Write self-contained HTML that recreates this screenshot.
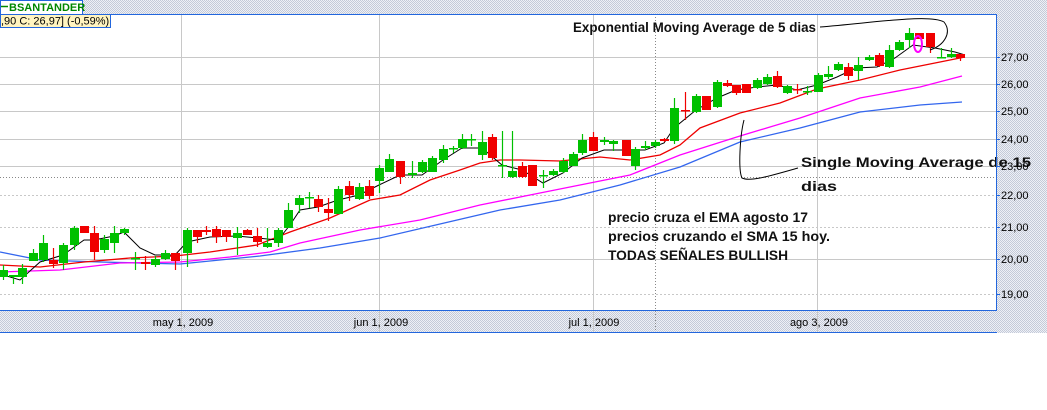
<!DOCTYPE html>
<html><head><meta charset="utf-8"><style>
html,body{margin:0;padding:0;background:#fff;width:1047px;height:410px;overflow:hidden;font-family:"Liberation Sans",sans-serif}
</style></head><body>
<svg width="1047" height="410" viewBox="0 0 1047 410" xmlns="http://www.w3.org/2000/svg" font-family="Liberation Sans, sans-serif">
<defs>
<pattern id="h" width="2" height="2" patternUnits="userSpaceOnUse"><rect width="2" height="2" fill="#eef0f6"/><rect width="1" height="1" fill="#c4cad8"/><rect x="1" y="1" width="1" height="1" fill="#c4cad8"/></pattern>
</defs>
<rect x="0" y="0" width="1047" height="333" fill="url(#h)"/>
<rect x="0" y="14" width="996" height="296" fill="#fff"/>
<rect x="0" y="333" width="1047" height="77" fill="#fff"/>
<g stroke="#c8c8c8" stroke-width="1">
<line x1="0" y1="57.5" x2="996" y2="57.5"/><line x1="0" y1="84.5" x2="996" y2="84.5"/>
<line x1="0" y1="111.5" x2="996" y2="111.5"/><line x1="0" y1="139.5" x2="996" y2="139.5"/>
<line x1="0" y1="166.5" x2="996" y2="166.5"/><line x1="0" y1="259.5" x2="996" y2="259.5"/>
<line x1="181.5" y1="14" x2="181.5" y2="333"/><line x1="379.5" y1="14" x2="379.5" y2="333"/>
<line x1="593.5" y1="14" x2="593.5" y2="333"/><line x1="817.5" y1="14" x2="817.5" y2="333"/>
</g>
<g stroke="#c8c8c8" stroke-dasharray="2,2">
<line x1="0" y1="195.5" x2="996" y2="195.5"/><line x1="0" y1="227.5" x2="996" y2="227.5"/><line x1="0" y1="294.5" x2="996" y2="294.5"/>
</g>
<g stroke="#888" stroke-dasharray="1,2">
<line x1="0" y1="177.5" x2="996" y2="177.5"/><line x1="655.5" y1="14" x2="655.5" y2="333"/>
</g>
<g fill="none" stroke-width="1.3">
<polyline stroke="#3366ee" points="0,252 40,260 100,262 180,264 260,256 320,248 380,238 440,224 500,210 560,200 620,185 680,167 740,142 800,128 860,112 920,105 962,102"/>
<polyline stroke="#ff00ff" points="0,272 60,270 120,263 180,262 230,257 270,252 300,243 360,230 420,220 480,205 530,195 580,185 630,175 680,155 740,136 800,118 860,98 920,87 962,76"/>
<polyline stroke="#ee0000" points="0,265 40,267 84,262 130,258 175,256 210,252 257,245 290,232 330,218 370,200 400,195 430,180 460,170 480,163 500,160 520,160 560,161 600,157 630,160 660,155 680,145 700,128 740,113 780,103 817,89 860,80 900,70 930,64 965,57"/>
<polyline stroke="#000" stroke-width="1" points="0,274 20,280 40,262 63,255 84,240 94,240 114,236 124,232 140,248 155,255 175,255 187,242 210,237 237,236 257,238 278,240 290,225 300,210 318,207 338,200 359,195 379,185 400,175 422,175 443,160 462,148 482,148 502,165 522,170 543,183 563,173 582,158 604,150 626,150 645,150 664,143 674,128 696,110 717,98 736,90 757,87 777,85 797,90 817,85 837,77 856,68 877,67 895,58 913,45 935,48 955,52 965,55"/>
</g>
<g id="c"></g>
<g fill="none" stroke="#000" stroke-width="1">
<path d="M820,27 C880,22 930,14 944,22 C952,32 945,45 930,50"/>
<path d="M798,168 C770,176 750,182 742,178 C738,170 740,135 744,120"/>
</g>
<ellipse cx="918" cy="44" rx="4" ry="8" fill="none" stroke="#ff00ff" stroke-width="2"/>
<g font-weight="bold" font-size="14" fill="#111">
<text x="573" y="32" textLength="243" lengthAdjust="spacingAndGlyphs">Exponential Moving Average de 5 dias</text>
<text x="801" y="167" textLength="230" lengthAdjust="spacingAndGlyphs">Single Moving Average de 15</text>
<text x="801" y="191" textLength="36" lengthAdjust="spacingAndGlyphs">dias</text>
<text x="608" y="222" textLength="200" lengthAdjust="spacingAndGlyphs">precio cruza el EMA agosto 17</text>
<text x="608" y="241" textLength="222" lengthAdjust="spacingAndGlyphs">precios cruzando el SMA 15 hoy.</text>
<text x="608" y="260" textLength="180" lengthAdjust="spacingAndGlyphs">TODAS SEÑALES BULLISH</text>
</g>
<g stroke="#2266dd" stroke-width="1" fill="none">
<line x1="0" y1="14.5" x2="997" y2="14.5"/><line x1="996.5" y1="14" x2="996.5" y2="311"/>
<line x1="0" y1="310.5" x2="997" y2="310.5"/><line x1="0" y1="332.5" x2="997" y2="332.5"/>
</g>
<g stroke="#2266dd">
<line x1="996" y1="57.5" x2="1000" y2="57.5"/><line x1="996" y1="84.5" x2="1000" y2="84.5"/><line x1="996" y1="111.5" x2="1000" y2="111.5"/><line x1="996" y1="139.5" x2="1000" y2="139.5"/><line x1="996" y1="166.5" x2="1000" y2="166.5"/><line x1="996" y1="195.5" x2="1000" y2="195.5"/><line x1="996" y1="227.5" x2="1000" y2="227.5"/><line x1="996" y1="259.5" x2="1000" y2="259.5"/><line x1="996" y1="294.5" x2="1000" y2="294.5"/>
</g>
<g font-size="11" fill="#000">
<text x="1001" y="61">27,00</text><text x="1001" y="88">26,00</text><text x="1001" y="115">25,00</text><text x="1001" y="143">24,00</text><text x="1001" y="170">23,00</text><text x="1001" y="199">22,00</text><text x="1001" y="231">21,00</text><text x="1001" y="263">20,00</text><text x="1001" y="298">19,00</text>
<g text-anchor="middle"><text x="183" y="326">may 1, 2009</text><text x="381" y="326">jun 1, 2009</text><text x="594" y="326">jul 1, 2009</text><text x="819" y="326">ago 3, 2009</text></g>
</g>
<rect x="0.5" y="0.5" width="82" height="14" fill="#fff" stroke="#2266dd"/>
<line x1="1" y1="6.5" x2="8" y2="6.5" stroke="#008800" stroke-width="1.5"/>
<text x="9" y="11" font-size="11" font-weight="bold" fill="#008800">BSANTANDER</text>
<rect x="0.5" y="14.5" width="110" height="13" fill="#fff4c0" stroke="#2266dd"/>
<text x="1" y="24.5" font-size="11" fill="#000">,90  C: 26,97] (-0,59%)</text>
</svg>
<script>
var d=[[3,'g',270,277,265,280],[13,'g',275,277,275,284],[22,'g',268,277,264,284],[33,'g',253,261,249,261],[43,'g',243,260,235,262],[53,'r',260,264,248,268],[63,'g',245,263,243,270],[74,'g',228,245,226,250],[84,'r',226,233,226,233],[94,'r',233,252,226,260],[104,'g',239,250,235,253],[114,'g',233,243,226,253],[124,'g',229,233,228,235],[135,'g',258,259,252,270],[145,'r',262,264,256,270],[155,'g',259,265,256,267],[165,'g',253,259,250,260],[175,'r',253,261,253,270],[187,'g',230,253,228,267],[197,'r',230,237,230,243],[206,'r',230,232,226,235],[216,'r',229,237,226,243],[226,'r',230,237,230,242],[237,'g',233,238,227,255],[247,'r',230,235,229,235],[257,'r',236,242,228,247],[267,'g',243,247,228,248],[278,'g',230,243,228,247],[288,'g',210,228,203,228],[299,'g',198,205,195,213],[309,'g',197,198,192,208],[318,'r',199,207,195,212],[328,'r',209,213,198,221],[338,'g',189,214,186,214],[349,'r',186,195,181,201],[359,'g',187,199,183,200],[369,'r',186,196,180,199],[379,'g',168,181,165,193],[389,'g',159,172,154,172],[400,'r',161,177,161,184],[412,'g',173,175,161,178],[422,'g',162,172,160,173],[432,'g',158,172,156,172],[443,'g',149,160,145,163],[453,'g',148,149,146,153],[462,'g',139,148,134,149],[471,'g',139,140,134,146],[482,'g',142,155,131,160],[492,'r',137,158,134,160],[502,'g',165,166,131,178],[512,'g',171,177,131,178],[522,'r',166,177,162,178],[532,'r',165,186,165,186],[543,'g',175,176,170,188],[553,'g',171,175,169,176],[563,'g',161,172,158,173],[573,'g',154,166,152,166],[582,'g',140,153,134,155],[593,'r',137,151,132,151],[604,'g',140,142,137,145],[613,'g',141,144,140,151],[626,'r',140,156,140,156],[635,'g',149,166,147,170],[645,'g',146,148,141,150],[655,'g',142,146,140,148],[664,'r',139,141,138,142],[674,'g',108,141,98,144],[685,'r',110,111,92,120],[696,'g',96,112,94,113],[706,'r',96,110,96,110],[717,'g',82,107,80,108],[727,'r',83,86,80,87],[736,'r',85,93,85,95],[746,'r',84,93,84,93],[757,'g',80,88,78,89],[767,'g',77,84,74,85],[777,'r',76,87,71,88],[787,'g',86,93,85,94],[797,'r',89,90,84,94],[807,'g',91,92,86,95],[818,'g',75,92,73,92],[828,'g',74,77,66,79],[838,'g',64,70,62,71],[848,'r',67,76,63,80],[858,'g',65,71,57,80],[869,'g',57,60,55,61],[879,'r',55,66,53,67],[889,'g',50,67,45,68],[899,'g',42,50,40,51],[909,'g',33,40,28,48],[919,'r',33,39,33,39],[930,'r',33,47,33,53],[941,'g',57,58,48,58],[951,'g',54,57,48,58],[960,'r',54,58,54,61]];
var s='';d.forEach(function(c){var col=c[1]=='g'?'#00c000':'#f00000';s+='<line x1="'+(c[0]+.5)+'" x2="'+(c[0]+.5)+'" y1="'+c[4]+'" y2="'+c[5]+'" stroke="'+col+'" stroke-width="1.2"/>';var h=Math.max(c[3]-c[2],1.5);s+='<rect x="'+(c[0]-4)+'" y="'+c[2]+'" width="9" height="'+h+'" fill="'+col+'"/>';});
document.getElementById('c').innerHTML=s;
</script>
</body></html>
